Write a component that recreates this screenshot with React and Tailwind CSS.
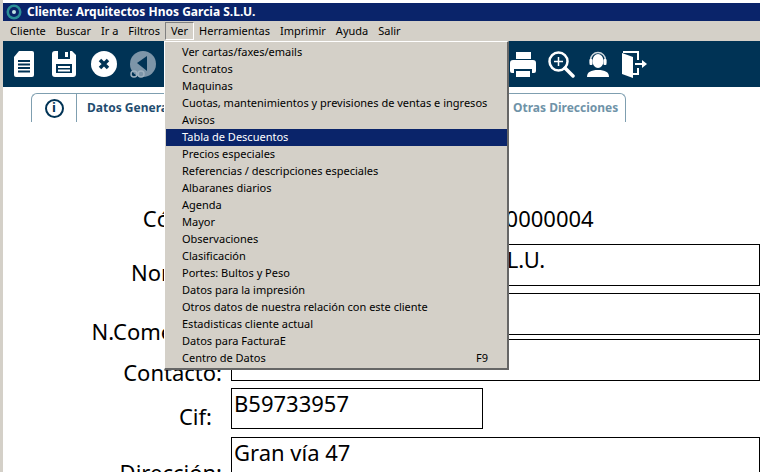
const menuItems = [
  'Ver cartas/faxes/emails',
  'Contratos',
  'Maquinas',
  'Cuotas, mantenimientos y previsiones de ventas e ingresos',
  'Avisos',
  'Tabla de Descuentos',
  'Precios especiales',
  'Referencias / descripciones especiales',
  'Albaranes diarios',
  'Agenda',
  'Mayor',
  'Observaciones',
  'Clasificación',
  'Portes: Bultos y Peso',
  'Datos para la impresión',
  'Otros datos de nuestra relación con este cliente',
  'Estadisticas cliente actual',
  'Datos para FacturaE',
  'Centro de Datos',
]

const topMenu = ['Cliente', 'Buscar', 'Ir a', 'Filtros', 'Ver', 'Herramientas', 'Imprimir', 'Ayuda', 'Salir']

function Logo() {
  return (
    <svg width="16" height="16" viewBox="0 0 16 16" className="shrink-0">
      <circle cx="8" cy="8" r="7.5" fill="#2a8f96" />
      <circle cx="8" cy="8" r="5" fill="#0a2468" />
      <circle cx="8" cy="8" r="2" fill="#bfe3e3" />
    </svg>
  )
}

function DocIcon() {
  return (
    <svg width="22" height="28" viewBox="0 0 22 28">
      <path d="M6 1h13a2 2 0 0 1 2 2v22a2 2 0 0 1-2 2H3a2 2 0 0 1-2-2V7z" fill="#fff" />
      <path d="M5 10h12v2H5zM5 13.500h12v2H5zM5 17h12v2H5zM5 20.500h12v2H5z" fill="#003355" />
    </svg>
  )
}

function SaveIcon() {
  return (
    <svg width="24" height="26" viewBox="0 0 24 26">
      <path d="M3 0h17l4 4v19a3 3 0 0 1-3 3H3a3 3 0 0 1-3-3V3a3 3 0 0 1 3-3z" fill="#fff" />
      <path d="M6 0h12v8H6z" fill="#003355" />
      <path d="M13 1h3v5h-3z" fill="#fff" />
      <path d="M4 13h16v9H4z" fill="#003355" />
      <path d="M6 15h12v2H6zM6 18.500h12v2H6z" fill="#fff" />
    </svg>
  )
}

function CloseIcon() {
  return (
    <svg width="26" height="26" viewBox="0 0 26 26">
      <circle cx="13" cy="13" r="13" fill="#fff" />
      <path d="M9 9l8 8M17 9l-8 8" stroke="#003355" strokeWidth="3.500" />
    </svg>
  )
}

function BackIcon() {
  return (
    <svg width="26" height="27" viewBox="0 0 26 27">
      <circle cx="13" cy="13" r="13" fill="#7d95a8" />
      <path d="M7 12l10-7v15z" fill="#003355" />
      <circle cx="4" cy="23" r="3" fill="none" stroke="#9fb1bf" strokeWidth="1.500" />
      <circle cx="11" cy="23" r="3" fill="none" stroke="#9fb1bf" strokeWidth="1.500" />
    </svg>
  )
}

function PrinterIcon() {
  return (
    <svg width="26" height="25" viewBox="0 0 26 25">
      <path d="M6 0h15v7H6z" fill="#fff" />
      <path d="M3 8h20a3 3 0 0 1 3 3v8a2 2 0 0 1-2 2h-2v-4H4v4H2a2 2 0 0 1-2-2v-8a3 3 0 0 1 3-3z" fill="#fff" />
      <path d="M6 19h14v6H6z" fill="#fff" />
    </svg>
  )
}

function ZoomIcon() {
  return (
    <svg width="27" height="27" viewBox="0 0 27 27">
      <circle cx="10.500" cy="10.500" r="9" fill="none" stroke="#fff" strokeWidth="2.500" />
      <path d="M17 17l8 8" stroke="#fff" strokeWidth="3.500" strokeLinecap="round" />
      <path d="M10.500 6v9M6 10.500h9" stroke="#fff" strokeWidth="1.500" />
    </svg>
  )
}

function SupportIcon() {
  return (
    <svg width="22" height="26" viewBox="0 0 22 26">
      <path d="M3.500 12V9a7.500 7.500 0 0 1 15 0v3" fill="none" stroke="#cfd8de" strokeWidth="1.500" />
      <ellipse cx="11" cy="10" rx="5.500" ry="7" fill="#fff" />
      <rect x="2.500" y="8" width="3" height="6" rx="1" fill="#fff" />
      <rect x="16.500" y="8" width="3" height="6" rx="1" fill="#fff" />
      <path d="M0 26c0-5 4-7 11-7s11 2 11 7z" fill="#fff" />
    </svg>
  )
}

function ExitIcon() {
  return (
    <svg width="27" height="27" viewBox="0 0 27 27">
      <path d="M1 2l11 4v21l-11-4z" fill="#fff" />
      <path d="M2 1h15v8M17 17v6h-5" fill="none" stroke="#fff" strokeWidth="2" />
      <path d="M14 12h7V9l5 4-5 4v-3h-7z" fill="#fff" />
    </svg>
  )
}

function FormRow({ label, value, rowClass, boxClass, labelClass }) {
  return (
    <div className={`flex ${rowClass}`}>
      <div className={`w-[219px] shrink-0 text-right ${labelClass}`}>{label}</div>
      <div className={`ml-[9px] pl-[2px] leading-[28px] ${boxClass}`}>{value}</div>
    </div>
  )
}

export default function App() {
  return (
    <div
      className="relative w-[760px] h-[472px] overflow-hidden bg-white border-l-[3px] border-[#d4d0c8] text-black"
      style={{ fontFamily: '"Noto Sans", Tahoma, sans-serif' }}
    >
      {/* Title bar */}
      <div className="mt-[3px] h-[18px] bg-[#0a246a] flex items-center gap-[5px] pl-[3px] text-white text-[12px] font-bold">
        <Logo />
        <span>Cliente: Arquitectos Hnos Garcia S.L.U.</span>
      </div>

      {/* Menu bar */}
      <div className="h-[20px] bg-[#d4d0c8] flex items-center pl-[2px] text-[11px]">
        {topMenu.map((m) => (
          <span
            key={m}
            className={
              m === 'Ver'
                ? 'h-[18px] px-[5px] flex items-center border-l border-t border-[#808080] border-r-white border-r border-b border-b-white'
                : 'px-[5px]'
            }
          >
            {m}
          </span>
        ))}
      </div>

      {/* Toolbar */}
      <div className="h-[46px] bg-[#003355] flex items-center pl-[10px]">
        <div className="w-[39px]"><DocIcon /></div>
        <div className="w-[39px]"><SaveIcon /></div>
        <div className="w-[39px]"><CloseIcon /></div>
        <div className="w-[380px]"><BackIcon /></div>
        <div className="flex items-center gap-[12px]">
          <PrinterIcon />
          <ZoomIcon />
          <SupportIcon />
          <ExitIcon />
        </div>
      </div>

      {/* Tabs */}
      <div className="flex items-start pl-[28px] pt-[6px] h-[35px]">
        <div className="flex h-[29px] border-l border-t border-[#7f9fb0] rounded-tl-[6px]">
          <div className="w-[45px] flex items-center justify-center border-r border-[#7f9fb0]">
            <span className="w-[19px] h-[19px] rounded-full border-2 border-[#003355] text-[#003355] text-[13px] font-bold flex items-center justify-center">i</span>
          </div>
          <div className="pl-[10px] text-[12px] font-bold text-[#1f4d70] leading-[28px] w-[300px]">Datos Generales</div>
        </div>
        <div className="h-[29px] pl-[137px] pr-[7px] border-t border-r border-[#7f9fb0] rounded-tr-[6px] text-[12px] font-bold text-[#6f93a8] leading-[28px] -ml-[1px]">
          Otras Direcciones
        </div>
      </div>

      {/* Form */}
      <div className="pt-[82px] text-[22px]">
        <FormRow label="Código:" value="00000004" rowClass="h-[40px]" labelClass="leading-[28px]" boxClass="pl-[262px]" />
        <FormRow label="Nombre:" value="Arquitectos Hnos Garcia S.L.U." rowClass="h-[42px] mb-[7px]" labelClass="leading-[56px]" boxClass="w-[600px] border border-black" />
        <FormRow label="N.Comercial:" value="" rowClass="h-[42px] mb-[4px]" labelClass="leading-[76px]" boxClass="w-[600px] border border-black" />
        <FormRow label="Contacto:" value="" rowClass="h-[42px] mb-[7px]" labelClass="leading-[66px]" boxClass="w-[600px] border border-black" />
        <FormRow label="Cif:" value="B59733957" rowClass="h-[41px] mb-[8px]" labelClass="leading-[56px] pr-[10px]" boxClass="w-[252px] border border-black" />
        <FormRow label="Dirección:" value="Gran vía 47" rowClass="h-[60px]" labelClass="leading-[70px]" boxClass="w-[600px] border border-black" />
      </div>

      {/* Open menu */}
      <div className="absolute left-[161px] top-[41px] w-[345px] h-[329px] bg-[#d4d0c8] border-l border-t border-white border-r-2 border-b-2 border-r-[#666666] border-b-[#666666] pt-[2px] pl-[1px] text-[11px]">
        {menuItems.map((item) => (
          <div
            key={item}
            className={`h-[17px] flex items-center justify-between pl-[16px] pr-[19px] ${
              item === 'Tabla de Descuentos' ? 'bg-[#0a246a] text-white' : ''
            }`}
          >
            <span>{item}</span>
            {item === 'Centro de Datos' && <span>F9</span>}
          </div>
        ))}
      </div>
    </div>
  )
}
